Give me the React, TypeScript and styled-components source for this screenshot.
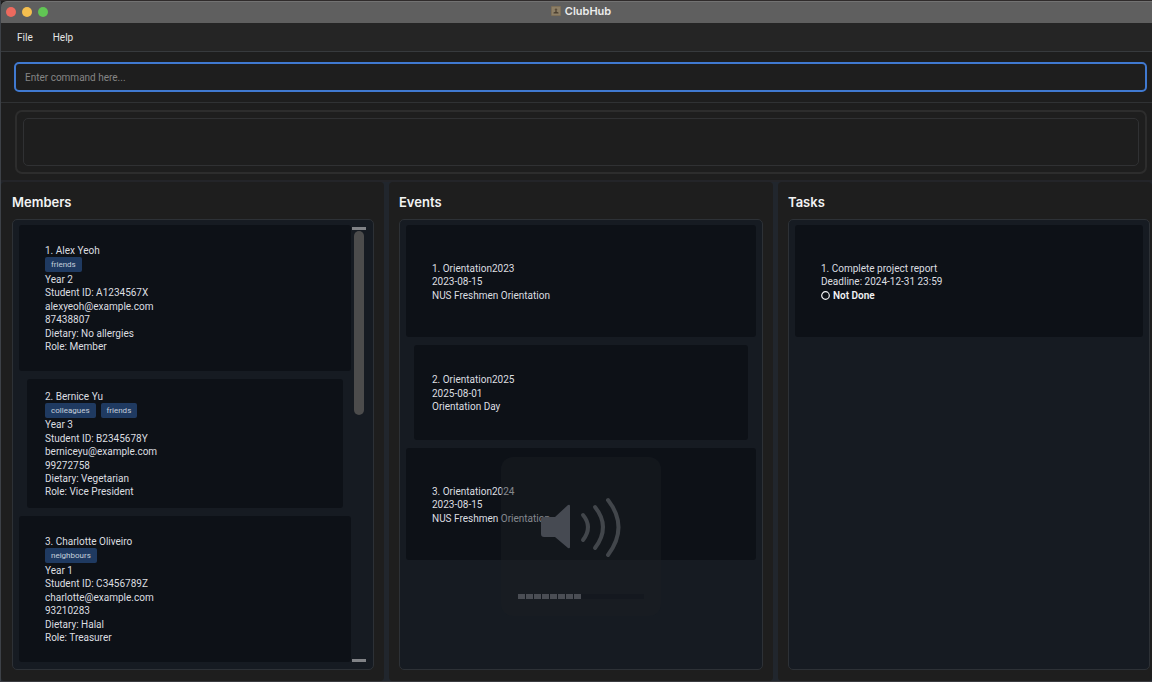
import React from "react";
import styled, { createGlobalStyle } from "styled-components";

const GlobalStyle = createGlobalStyle`
  * { box-sizing: border-box; }
  body {
    margin: 0;
    background: #141414;
    color: #dcdee0;
    font: 10px/13px Roboto, "Liberation Sans", sans-serif;
  }
`;

const Window = styled.div`
  display: flex;
  flex-direction: column;
  height: 100vh;
  min-height: 480px;
  background: #1e1e1e;
  border-top: 1px solid #2f2b2b;
  border-left: 1px solid #3d4147;
  border-bottom: 1px solid #3a3b40;
`;

const TitleBar = styled.header`
  position: relative;
  display: flex;
  align-items: center;
  justify-content: center;
  flex: none;
  height: 22px;
  padding: 0 0 3px 9px;
  background: #5f5f5f;
  border-top: 1px solid #727272;
  border-top-left-radius: 6px;
`;

const Lights = styled.div`
  position: absolute;
  left: 5px;
  top: 5px;
  display: flex;
  gap: 6px;
`;

const Light = styled.button<{ $color: string }>`
  width: 10px;
  height: 10px;
  padding: 0;
  border: 0;
  border-radius: 50%;
  background: ${(p) => p.$color};
`;

const AppTitle = styled.h1`
  display: flex;
  align-items: center;
  gap: 4px;
  margin: 0;
  font: 600 11px/14px Inter, "Liberation Sans", sans-serif;
  color: #ececec;
`;

const MenuBar = styled.nav`
  display: flex;
  align-items: center;
  flex: none;
  gap: 20px;
  height: 29px;
  padding: 0 16px;
  background: #252525;
  border-bottom: 1px solid #373a3d;
`;

const MenuButton = styled.button`
  padding: 0;
  border: 0;
  background: none;
  color: #e4e4e4;
  font: inherit;
`;

const CommandArea = styled.form`
  flex: none;
  padding: 10px 5px 10px 13px;
  border-bottom: 1px solid #303234;
`;

const CommandInput = styled.input`
  display: block;
  width: 100%;
  height: 30px;
  padding: 0 9px;
  border: 2px solid #4079d0;
  border-radius: 5px;
  outline: none;
  background: #1e1e1e;
  color: #d6d8da;
  font: inherit;
  &::placeholder { color: #858585; opacity: 1; }
`;

const ResultArea = styled.section`
  flex: none;
  padding: 7px 5px 6px 14px;
  border-bottom: 2px solid #242529;
`;

const ResultFrame = styled.div`
  padding: 6px;
  border: 2px solid #2d2d2d;
  border-radius: 7px;
`;

const ResultBox = styled.output`
  display: block;
  height: 48px;
  border: 1px solid #303133;
  border-radius: 5px;
`;

const Panes = styled.main`
  display: grid;
  grid-template-columns: minmax(0, 383fr) minmax(0, 384fr) minmax(0, 374fr);
  flex: 1;
  min-height: 0;
  background: #21262d;
  gap: 5px;
`;

const Pane = styled.section<{ $first?: boolean; $last?: boolean }>`
  display: flex;
  flex-direction: column;
  min-height: 0;
  padding: 13px ${(p) => (p.$last ? 2 : 10)}px 11px ${(p) => (p.$first ? 11 : 10)}px;
  background: #1e1e1e;
  border-radius: 4px;
`;

const PaneTitle = styled.h2`
  margin: 0 0 9px;
  font: 600 13px/15px Inter, "Liberation Sans", sans-serif;
  color: #f2f3f4;
`;

const ListBox = styled.div`
  display: flex;
  flex: 1;
  min-height: 0;
  padding: 5px 6px 6px;
  border: 1px solid #2d3136;
  border-radius: 5px;
  background: #161b22;
`;

const List = styled.ul`
  flex: 1;
  min-width: 0;
  margin: 0;
  padding: 0;
  list-style: none;
  overflow: hidden;
`;

const Cell = styled.li<{ $tall?: boolean }>`
  height: ${(p) => (p.$tall ? 146 : 112)}px;
  &:nth-child(even) {
    height: ${(p) => (p.$tall ? 145 : 111)}px;
    padding: 8px;
  }
`;

const Card = styled.article`
  display: flex;
  align-items: center;
  height: 100%;
  padding: 1px 26px 0;
  border-radius: 3px;
  background: #0d1117;
  ${Cell}:nth-child(even) & { padding: 1px 18px 0; }
`;

const Lines = styled.div<{ $tall?: boolean }>`
  display: flex;
  flex-direction: column;
  justify-content: space-between;
  height: ${(p) => (p.$tall ? 109 : 40)}px;
  white-space: nowrap;
`;

const Tags = styled.div`
  display: flex;
  gap: 5px;
`;

const Tag = styled.span`
  padding: 0 6px;
  border-radius: 2px;
  background: #1f3a61;
  color: #c6d0dc;
  font-size: 8px;
  line-height: 15px;
`;

const Status = styled.div`
  display: flex;
  align-items: center;
  gap: 3px;
  font-weight: 600;
  color: #f2f3f4;
`;

const ScrollBar = styled.div`
  display: flex;
  flex-direction: column;
  align-items: center;
  flex: none;
  width: 14px;
  margin: 2px 1px 1px;
`;

const ScrollCap = styled.div`
  width: 14px;
  height: 3px;
  background: #808286;
`;

const ScrollTrack = styled.div`
  flex: 1;
  padding-top: 1px;
`;

const ScrollThumb = styled.div`
  width: 10px;
  height: 43%;
  border-radius: 5px;
  background: #4c4c4c;
`;

const VolumeOverlay = styled.aside`
  position: fixed;
  left: calc(50% - 75px);
  bottom: 66px;
  display: flex;
  flex-direction: column;
  align-items: center;
  width: 160px;
  height: 159px;
  padding-top: 40px;
  border-radius: 12px;
  background: rgba(26, 30, 35, 0.45);
`;

const VolumeLevel = styled.div`
  display: flex;
  gap: 1px;
  width: 126px;
  height: 5px;
  margin-top: 37px;
  background: rgba(14, 18, 24, 0.3);
`;

const VolumeStep = styled.span`
  width: 7px;
  background: #4a4d54;
`;

type Member = { name: string; tags: string[]; details: string[] };

const members: Member[] = [
  {
    name: "Alex Yeoh",
    tags: ["friends"],
    details: ["Year 2", "Student ID: A1234567X", "alexyeoh@example.com", "87438807", "Dietary: No allergies", "Role: Member"],
  },
  {
    name: "Bernice Yu",
    tags: ["colleagues", "friends"],
    details: ["Year 3", "Student ID: B2345678Y", "berniceyu@example.com", "99272758", "Dietary: Vegetarian", "Role: Vice President"],
  },
  {
    name: "Charlotte Oliveiro",
    tags: ["neighbours"],
    details: ["Year 1", "Student ID: C3456789Z", "charlotte@example.com", "93210283", "Dietary: Halal", "Role: Treasurer"],
  },
];

const events = [
  ["Orientation2023", "2023-08-15", "NUS Freshmen Orientation"],
  ["Orientation2025", "2025-08-01", "Orientation Day"],
  ["Orientation2024", "2023-08-15", "NUS Freshmen Orientation"],
];

export default function App() {
  return (
    <>
      <GlobalStyle />
      <Window>
        <TitleBar>
          <Lights>
            <Light $color="#ed6a5e" aria-label="Close" />
            <Light $color="#f5bf4f" aria-label="Minimize" />
            <Light $color="#61c554" aria-label="Zoom" />
          </Lights>
          <AppTitle>
            <svg width="10" height="10" viewBox="0 0 10 10" aria-hidden="true">
              <rect width="10" height="10" rx="1" fill="#7d6f58" />
              <rect x="1" y="1" width="8" height="8" fill="#8d7f66" />
              <circle cx="5" cy="3.6" r="1.2" fill="#5a4d3c" />
              <path d="M4.4 4.5h1.2v1.3l1.9.6v1.2h-5v-1.2l1.9-.6z" fill="#4a3f30" />
            </svg>
            ClubHub
          </AppTitle>
        </TitleBar>
        <MenuBar>
          <MenuButton>File</MenuButton>
          <MenuButton>Help</MenuButton>
        </MenuBar>
        <CommandArea>
          <CommandInput aria-label="Command" placeholder="Enter command here..." />
        </CommandArea>
        <ResultArea>
          <ResultFrame>
            <ResultBox />
          </ResultFrame>
        </ResultArea>
        <Panes>
          <Pane $first>
            <PaneTitle>Members</PaneTitle>
            <ListBox>
              <List>
                {members.map((m, i) => (
                  <Cell key={m.name} $tall>
                    <Card>
                      <Lines $tall>
                        <div>{`${i + 1}. ${m.name}`}</div>
                        <Tags>
                          {m.tags.map((t) => (
                            <Tag key={t}>{t}</Tag>
                          ))}
                        </Tags>
                        {m.details.map((d) => (
                          <div key={d}>{d}</div>
                        ))}
                      </Lines>
                    </Card>
                  </Cell>
                ))}
              </List>
              <ScrollBar>
                <ScrollCap />
                <ScrollTrack>
                  <ScrollThumb />
                </ScrollTrack>
                <ScrollCap />
              </ScrollBar>
            </ListBox>
          </Pane>
          <Pane>
            <PaneTitle>Events</PaneTitle>
            <ListBox>
              <List>
                {events.map(([name, date, description], i) => (
                  <Cell key={name}>
                    <Card>
                      <Lines>
                        <div>{`${i + 1}. ${name}`}</div>
                        <div>{date}</div>
                        <div>{description}</div>
                      </Lines>
                    </Card>
                  </Cell>
                ))}
              </List>
            </ListBox>
          </Pane>
          <Pane $last>
            <PaneTitle>Tasks</PaneTitle>
            <ListBox>
              <List>
                <Cell>
                  <Card>
                    <Lines>
                      <div>1. Complete project report</div>
                      <div>Deadline: 2024-12-31 23:59</div>
                      <Status>
                        <svg width="9" height="9" viewBox="0 0 9 9" aria-hidden="true">
                          <circle cx="4.5" cy="4.5" r="3.8" fill="none" stroke="currentColor" strokeWidth="1.2" />
                        </svg>
                        Not Done
                      </Status>
                    </Lines>
                  </Card>
                </Cell>
              </List>
            </ListBox>
          </Pane>
        </Panes>
      </Window>
      <VolumeOverlay aria-label="Volume">
        <svg width="82" height="60" viewBox="0 0 82 60" fill="none" stroke="#42464b" strokeWidth="4" strokeLinecap="round" aria-hidden="true">
          <path d="M3 20h12l13-12q2-1 2 1v41q0 2-2 1L15 40H4q-3 0-3-3V22q0-2 2-2z" fill="#464a52" stroke="none" />
          <path d="M43 18q10 12 0 25" />
          <path d="M55 10q16 20 0 41" />
          <path d="M68 3q21 27 0 55" />
        </svg>
        <VolumeLevel>
          {Array.from({ length: 8 }, (_, i) => (
            <VolumeStep key={i} />
          ))}
        </VolumeLevel>
      </VolumeOverlay>
    </>
  );
}
